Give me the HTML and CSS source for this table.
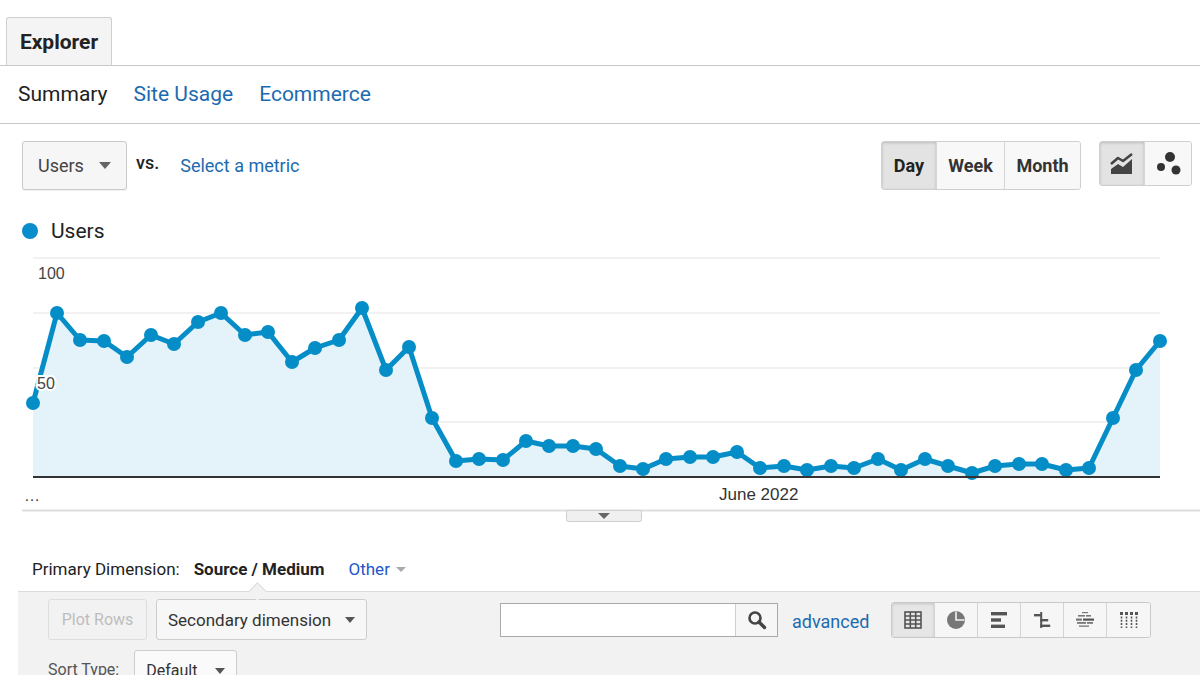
FILE: index.html
```html
<!DOCTYPE html>
<html>
<head>
<meta charset="utf-8">
<link rel="stylesheet" href="styles.css">
</head>
<body>
<div class="tabs">
  <div class="tab">Explorer</div>
</div>
<div class="subnav">
  <span class="sub current">Summary</span>
  <a class="sub link">Site Usage</a>
  <a class="sub link">Ecommerce</a>
</div>
<div class="controls">
  <div class="metric-dd"><span>Users</span><i class="caret"></i></div>
  <span class="vs">vs.</span>
  <a class="link select-metric">Select a metric</a>
  <div class="seg period">
    <span class="segbtn active day">Day</span>
    <span class="segbtn week">Week</span>
    <span class="segbtn month">Month</span>
  </div>
  <div class="seg charttype">
    <span class="segbtn active ct">
      <svg width="24" height="22" viewBox="0 0 24 22"><polyline points="1,11 8,5 13,8 22,1" fill="none" stroke="#444" stroke-width="2.6" stroke-linejoin="round"/><polygon points="1,21 1,16 8,11 13,14 22,6 22,21" fill="#444"/></svg>
    </span>
    <span class="segbtn ct">
      <svg width="26" height="26" viewBox="0 0 26 26"><circle cx="15" cy="6" r="5" fill="#333"/><circle cx="6" cy="16" r="4" fill="#333"/><circle cx="21" cy="19" r="4.5" fill="#333"/></svg>
    </span>
  </div>
</div>
<div class="legend">
  <i class="legend-dot"></i><span>Users</span>
</div>
<div class="chart">
  <svg class="chart-svg" width="1200" height="275" viewBox="0 0 1200 275">
    <defs>
      <marker id="dot" markerUnits="userSpaceOnUse" markerWidth="16" markerHeight="16" refX="8" refY="8">
        <circle cx="8" cy="8" r="7" fill="#058dc7"/>
      </marker>
    </defs>
    <g stroke="#ececec" stroke-width="1.5">
      <line x1="33" y1="8" x2="1160" y2="8"/>
      <line x1="33" y1="63" x2="1160" y2="63"/>
      <line x1="33" y1="118" x2="1160" y2="118"/>
      <line x1="33" y1="172" x2="1160" y2="172"/>
    </g>
    <polygon fill="#e4f2f9" points="33,153 57,63 80,90 104,91 127,107 151,85 174,94 198,72 221,63 245,85 268,82 292,112 315,98 339,90 362,58 386,120 409,97 432,168 456,211 479,209 503,210 526,191 549,196 573,196 596,199 620,216 643,219 666,209 690,207 713,207 737,202 760,218 784,216 807,220 831,216 854,218 878,209 901,220 925,209 948,216 972,223 995,216 1019,214 1042,214 1066,220 1089,218 1113,168 1136,120 1160,91 1160,227 33,227"/>
    <text class="axis" x="38" y="29">100</text>
    <polyline fill="none" stroke="#058dc7" stroke-width="5" stroke-linejoin="round" marker-start="url(#dot)" marker-mid="url(#dot)" marker-end="url(#dot)" points="33,153 57,63 80,90 104,91 127,107 151,85 174,94 198,72 221,63 245,85 268,82 292,112 315,98 339,90 362,58 386,120 409,97 432,168 456,211 479,209 503,210 526,191 549,196 573,196 596,199 620,216 643,219 666,209 690,207 713,207 737,202 760,218 784,216 807,220 831,216 854,218 878,209 901,220 925,209 948,216 972,223 995,216 1019,214 1042,214 1066,220 1089,218 1113,168 1136,120 1160,91"/>
    <text class="axis halo" x="37" y="139">50</text>
    <line x1="33" y1="227" x2="1160" y2="227" stroke="#333" stroke-width="2"/>
    <text class="axis" x="24" y="251">…</text>
    <text class="axis month-label" x="719" y="250">June 2022</text>
    <line x1="22" y1="260.5" x2="1200" y2="260.5" stroke="#ddd" stroke-width="2"/>
    <rect x="566.5" y="260.5" width="75" height="11" rx="2" fill="#f0f0f0" stroke="#cfcfcf"/>
    <polygon points="598,263 610,263 604,269" fill="#666"/>
  </svg>
</div>
<div class="dimension">
  <span class="dim-label">Primary Dimension:</span>
  <span class="dim-current">Source / Medium</span>
  <a class="dim-other">Other</a><i class="caret light"></i>
</div>
<div class="toolbar">
  <div class="tb-row">
    <span class="btn disabled plot">Plot Rows</span>
    <span class="btn secdim">Secondary dimension<i class="caret"></i></span>
    <div class="search">
      <span class="search-input"></span>
      <span class="search-btn">
        <svg width="20" height="20" viewBox="0 0 20 20"><circle cx="8" cy="8" r="5.5" fill="none" stroke="#444" stroke-width="2.6"/><line x1="12" y1="12" x2="17.5" y2="17.5" stroke="#444" stroke-width="3.4" stroke-linecap="round"/></svg>
      </span>
    </div>
    <a class="link advanced">advanced</a>
    <div class="seg views">
      <span class="vbtn active">
        <svg width="18" height="18" viewBox="0 0 18 18"><g fill="none" stroke="#555" stroke-width="1.6"><rect x="1" y="1" width="16" height="16"/><line x1="6.3" y1="1" x2="6.3" y2="17"/><line x1="11.7" y1="1" x2="11.7" y2="17"/><line x1="1" y1="5" x2="17" y2="5"/><line x1="1" y1="9" x2="17" y2="9"/><line x1="1" y1="13" x2="17" y2="13"/></g></svg>
      </span>
      <span class="vbtn">
        <svg width="20" height="20" viewBox="0 0 20 20"><circle cx="10" cy="10" r="9" fill="#777"/><path d="M10 1.5 L10 10 L18.5 10" fill="none" stroke="#f4f4f4" stroke-width="1.6"/></svg>
      </span>
      <span class="vbtn">
        <svg width="18" height="18" viewBox="0 0 18 18"><g fill="#555"><rect x="1" y="1" width="16" height="3.4"/><rect x="1" y="7.3" width="10" height="3.4"/><rect x="1" y="13.6" width="14" height="3.4"/></g></svg>
      </span>
      <span class="vbtn">
        <svg width="18" height="18" viewBox="0 0 18 18"><g fill="#555"><rect x="7.2" y="1" width="2" height="16"/><rect x="1" y="3" width="8" height="2.4"/><rect x="7.2" y="8" width="8" height="2.4"/><rect x="7.2" y="13.6" width="10" height="2.4"/></g></svg>
      </span>
      <span class="vbtn">
        <svg width="20" height="18" viewBox="0 0 20 18"><g fill="#777"><rect x="7" y="1" width="6" height="1.2"/><rect x="3" y="4" width="7" height="1.6"/><rect x="11" y="4" width="5" height="1.6"/><rect x="1" y="7.5" width="6" height="2.2"/><rect x="8" y="7.5" width="11" height="2.2" fill="#555"/><rect x="2" y="11" width="9" height="1.8"/><rect x="12" y="11" width="6" height="1.8"/><rect x="4" y="14.5" width="10" height="1.3"/></g></svg>
      </span>
      <span class="vbtn">
        <svg width="20" height="18" viewBox="0 0 20 18"><g fill="#555"><rect x="1" y="1" width="3" height="3"/><rect x="6" y="1" width="3" height="3"/><rect x="11" y="1" width="3" height="3"/><rect x="16" y="1" width="3" height="3"/></g><g stroke="#555" stroke-width="1.6" stroke-dasharray="2 1.3"><line x1="2.5" y1="5.5" x2="2.5" y2="17"/><line x1="7.5" y1="5.5" x2="7.5" y2="17"/><line x1="12.5" y1="5.5" x2="12.5" y2="17"/><line x1="17.5" y1="5.5" x2="17.5" y2="17"/></g></svg>
      </span>
    </div>
  </div>
  <div class="tb-row sort">
    <span class="sort-label">Sort Type:</span>
    <span class="btn sortdd">Default<i class="caret"></i></span>
  </div>
</div>
</body>
</html>
```

FILE: styles.css
```css
* { box-sizing: border-box; }

html, body {
  margin: 0;
  padding: 0;
  background: #fff;
  width: 1200px;
  height: 675px;
  overflow: hidden;
  font-family: Roboto, "Liberation Sans", Arial, sans-serif;
  color: #222;
}

a { text-decoration: none; cursor: pointer; }

.link { color: #1b6bb0; }

.caret {
  display: inline-block;
  width: 0;
  height: 0;
  border-left: 6px solid transparent;
  border-right: 6px solid transparent;
  border-top: 7px solid #666;
}
.caret.light { border-top-color: #aaa; border-left-width: 5px; border-right-width: 5px; border-top-width: 5px; margin-left: 6px; }

/* Tabs */
.tabs {
  height: 66px;
  padding: 17px 0 0 6px;
  border-bottom: 1px solid #c8c8c8;
  display: flex;
  align-items: flex-end;
}
.tab {
  width: 106px;
  height: 48px;
  border: 1px solid #cfcfcf;
  border-bottom: none;
  border-radius: 3px 3px 0 0;
  background: #f4f4f4;
  font-weight: 700;
  font-size: 21px;
  display: flex;
  align-items: center;
  justify-content: center;
  padding-top: 0;
  color: #222;
}

/* Sub navigation */
.subnav {
  height: 58px;
  border-bottom: 1px solid #c8c8c8;
  display: flex;
  align-items: center;
  gap: 26px;
  padding-left: 18px;
  padding-bottom: 2px;
  font-size: 21px;
}
.sub.current { color: #222; }

/* Controls */
.controls {
  height: 67px;
  padding-top: 17px;
  display: flex;
  align-items: flex-start;
}
.metric-dd {
  margin-left: 22px;
  width: 105px;
  height: 49px;
  border: 1px solid #cacaca;
  border-radius: 3px;
  background: #f6f6f6;
  box-shadow: 0 1px 1px rgba(0,0,0,0.06);
  display: flex;
  align-items: center;
  justify-content: space-between;
  padding: 0 15px 0 15px;
  font-size: 18px;
  color: #444;
}
.vs {
  margin-left: 9px;
  font-size: 18px;
  font-weight: 500;
  color: #222;
  line-height: 44px;
}
.select-metric {
  margin-left: 21px;
  font-size: 18px;
  line-height: 50px;
}

.seg {
  display: flex;
  border: 1px solid #cfcfcf;
  border-radius: 3px;
  overflow: hidden;
  background: #f7f7f7;
}
.period { margin-left: auto; height: 49px; }
.charttype { margin-left: 18px; margin-right: 8px; height: 45px; }
.segbtn {
  display: flex;
  align-items: center;
  justify-content: center;
  font-size: 18px;
  font-weight: 700;
  color: #333;
  border-right: 1px solid #d6d6d6;
  background: #f8f8f8;
}
.segbtn:last-child { border-right: none; }
.segbtn.active {
  background: #e3e3e3;
  box-shadow: inset 0 1px 3px rgba(0,0,0,0.18);
  color: #222;
}
.day { width: 55px; }
.week { width: 68px; }
.month { width: 75px; }
.ct { width: 45px; }
.ct:last-child { width: 46px; }

/* Legend */
.legend {
  height: 59px;
  display: flex;
  align-items: center;
  padding-left: 22px;
  padding-top: 21px;
  font-size: 21px;
  color: #222;
}
.legend-dot {
  width: 16px;
  height: 16px;
  border-radius: 50%;
  background: #0a8dcc;
  margin-right: 13px;
}

/* Chart */
.chart { height: 275px; }
.chart-svg { display: block; }
.axis {
  font-family: "Liberation Sans", Arial, sans-serif;
  font-size: 16px;
  fill: #444;
}
.halo {
  stroke: #fff;
  stroke-width: 4px;
  paint-order: stroke;
}
.month-label { font-size: 17px; fill: #333; }

/* Dimension row */
.dimension {
  height: 66px;
  display: flex;
  align-items: center;
  padding: 22px 0 0 32px;
  font-size: 17px;
}
.dim-label { color: #222; }
.dim-current { margin-left: 14px; font-weight: 700; color: #222; }
.dim-other { margin-left: 24px; color: #2456c9; }

/* Toolbar */
.toolbar {
  position: relative;
  margin-left: 18px;
  height: 90px;
  background: #f2f2f2;
  border-top: 1px solid #dcdcdc;
  padding: 7px 49px 0 30px;
}
.toolbar::before {
  content: "";
  position: absolute;
  left: 233px;
  top: -7px;
  width: 12px;
  height: 12px;
  background: #f2f2f2;
  border-left: 1px solid #dcdcdc;
  border-top: 1px solid #dcdcdc;
  transform: rotate(45deg);
}
.tb-row { display: flex; align-items: center; }
.btn {
  display: flex;
  align-items: center;
  height: 41px;
  border: 1px solid #cdcdcd;
  border-radius: 3px;
  background: #f7f7f7;
  font-size: 16px;
  color: #333;
}
.btn.disabled {
  color: #bdbdbd;
  border-color: #dedede;
  background: #f2f2f2;
}
.plot { width: 99px; justify-content: center; }
.secdim {
  margin-left: 9px;
  width: 211px;
  padding: 0 11px 0 11px;
  justify-content: space-between;
  font-size: 17px;
}
.secdim .caret, .sortdd .caret { border-left-width: 5px; border-right-width: 5px; border-top-width: 6px; border-top-color: #555; }

.search {
  margin-left: 133px;
  display: flex;
  height: 34px;
  border: 1px solid #a9a9a9;
  background: #fff;
}
.search-input { width: 234px; }
.search-btn {
  width: 42px;
  border-left: 1px solid #cfcfcf;
  background: #f6f6f6;
  display: flex;
  align-items: center;
  justify-content: center;
}
.advanced { margin-left: 14px; font-size: 18px; padding-top: 3px; }

.views { margin-left: auto; height: 36px; border-color: #c9c9c9; }
.vbtn {
  width: 43px;
  display: flex;
  align-items: center;
  justify-content: center;
  border-right: 1px solid #d4d4d4;
  background: #f6f6f6;
}
.vbtn:last-child { border-right: none; }
.vbtn.active { background: #e6e6e6; box-shadow: inset 0 1px 3px rgba(0,0,0,0.15); }

.sort { margin-top: 10px; align-items: flex-start; }
.sort-label { font-size: 16px; color: #555; margin-top: 10px; }
.sortdd {
  margin-left: 15px;
  width: 103px;
  padding: 0 11px 0 11px;
  justify-content: space-between;
  background: #fafafa;
}
```
